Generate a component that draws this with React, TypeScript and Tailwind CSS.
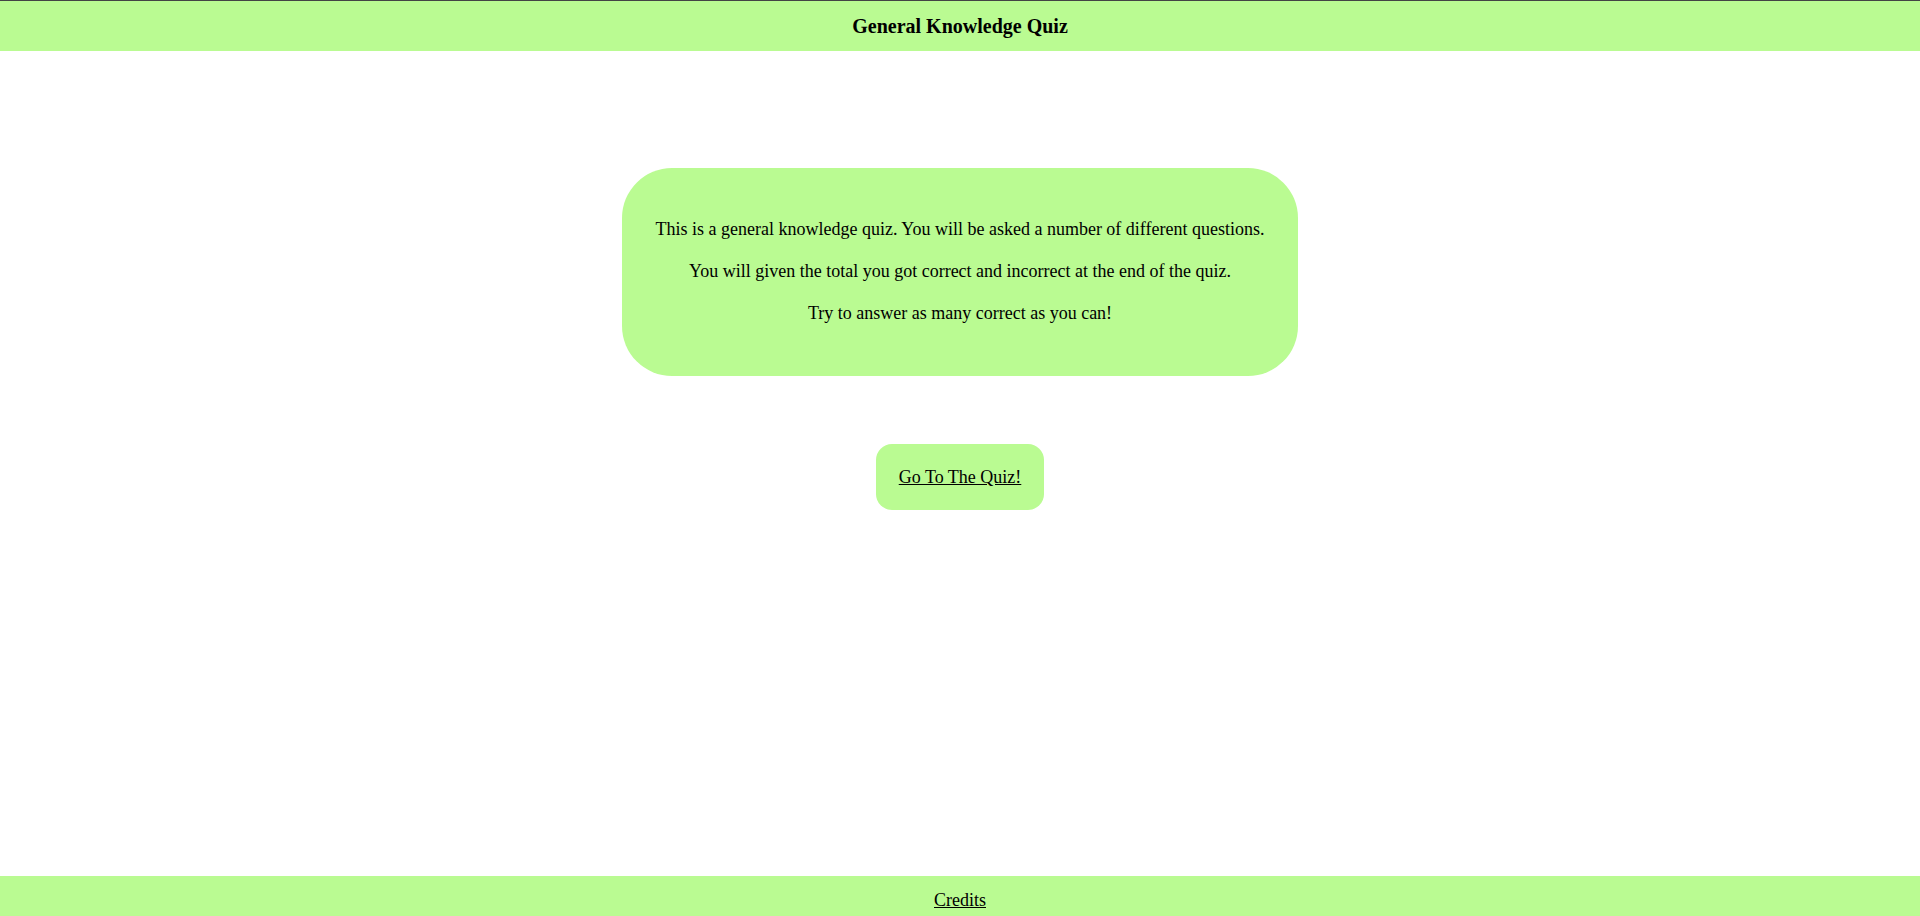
const serif = { fontFamily: '"Liberation Serif", "Times New Roman", serif' };

export default function App() {
  return (
    <div className="min-h-screen flex flex-col bg-white text-black text-[18px]" style={serif}>
      <header className="h-[51px] border-t border-[#444444] bg-[#bafb92] flex items-center justify-center">
        <h1 className="font-bold text-[20px] leading-[22px]">General Knowledge Quiz</h1>
      </header>

      <main className="flex-1 flex flex-col items-center pt-[117px]">
        <section className="w-[676px] h-[208px] rounded-[50px] bg-[#bafb92] flex flex-col items-center justify-center gap-[20px] pb-[3px] text-center leading-[22px]">
          <p>This is a general knowledge quiz. You will be asked a number of different questions.</p>
          <p>You will given the total you got correct and incorrect at the end of the quiz.</p>
          <p>Try to answer as many correct as you can!</p>
        </section>

        <a
          href="#quiz"
          className="mt-[68px] w-[168px] h-[66px] rounded-[16px] bg-[#bafb92] flex items-center justify-center underline leading-[22px]"
        >
          Go To The Quiz!
        </a>
      </main>

      <footer className="h-[40px] bg-[#bafb92] flex justify-center pt-[13px]">
        <a href="#credits" className="underline leading-[22px]">
          Credits
        </a>
      </footer>
    </div>
  );
}
